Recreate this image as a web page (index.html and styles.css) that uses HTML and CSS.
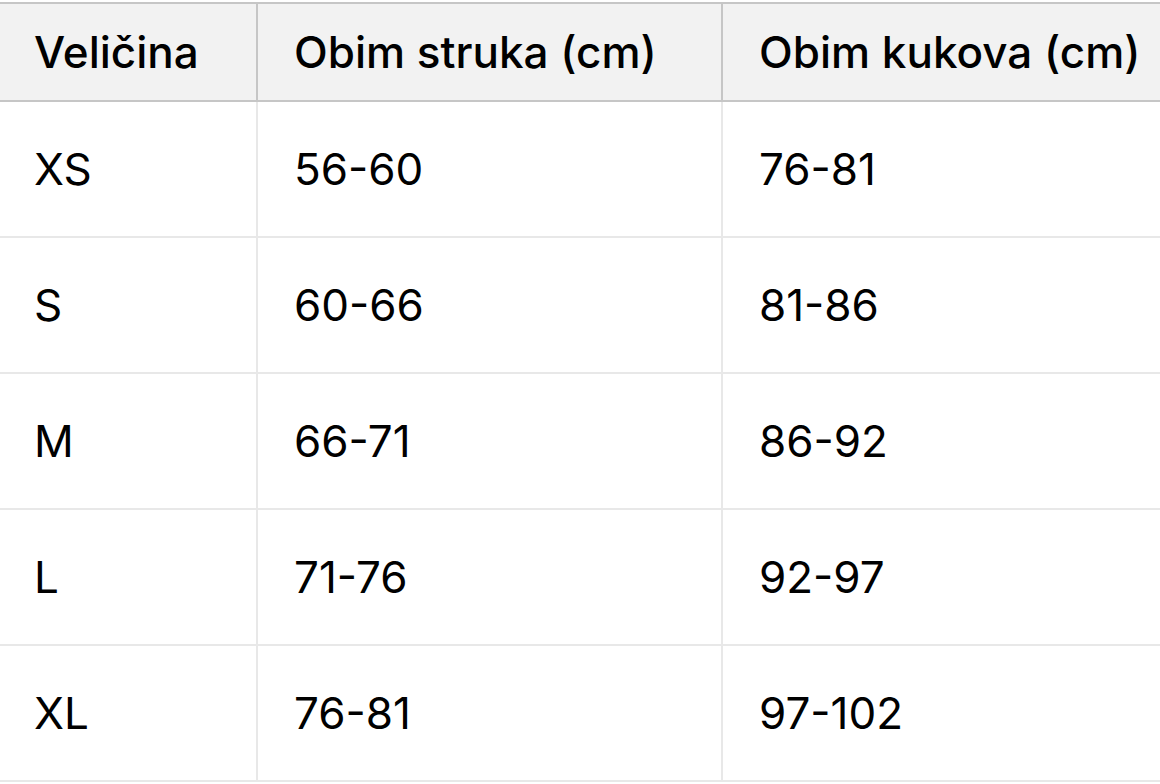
FILE: index.html
```html
<!DOCTYPE html>
<html lang="hr">
<head>
<meta charset="utf-8">
<title>Tablica veličina</title>
<link rel="stylesheet" href="styles.css">
</head>
<body>
<div class="wrap">
<table class="sizes">
  <colgroup>
    <col class="c1">
    <col class="c2">
    <col class="c3">
  </colgroup>
  <thead>
    <tr><th>Veličina</th><th>Obim struka (cm)</th><th>Obim kukova (cm)</th></tr>
  </thead>
  <tbody>
    <tr><td>XS</td><td>56-60</td><td>76-81</td></tr>
    <tr><td>S</td><td>60-66</td><td>81-86</td></tr>
    <tr><td>M</td><td>66-71</td><td>86-92</td></tr>
    <tr><td>L</td><td>71-76</td><td>92-97</td></tr>
    <tr><td>XL</td><td>76-81</td><td>97-102</td></tr>
  </tbody>
</table>
</div>
</body>
</html>
```
FILE: styles.css
```css
html, body {
  margin: 0;
  padding: 0;
  background: #ffffff;
}
body {
  font-family: Inter, "Noto Sans", "Liberation Sans", sans-serif;
  color: #000;
  overflow: hidden;
}
.wrap {
  padding-top: 2px;
  width: 1160px;
  overflow: hidden;
}
.sizes {
  border-collapse: collapse;
  table-layout: fixed;
  width: 1200px;
  font-size: 44px;
}
.c1 { width: 257px; }
.c2 { width: 465px; }
.c3 { width: 478px; }
.sizes th,
.sizes td {
  text-align: left;
  padding: 0 0 0 36px;
  white-space: nowrap;
}
.sizes th {
  background: #f2f2f2;
  font-weight: 500;
  line-height: 96px;
  height: 96px;
  border: 2px solid #c6c6c6;
}
.sizes td {
  font-weight: 400;
  line-height: 134px;
  height: 134px;
  border: 2px solid #e8e8e8;
}
.sizes th:first-child,
.sizes td:first-child {
  border-left: none;
  padding-left: 34px;
}
.sizes th:last-child,
.sizes td:last-child {
  border-right: none;
}
```
